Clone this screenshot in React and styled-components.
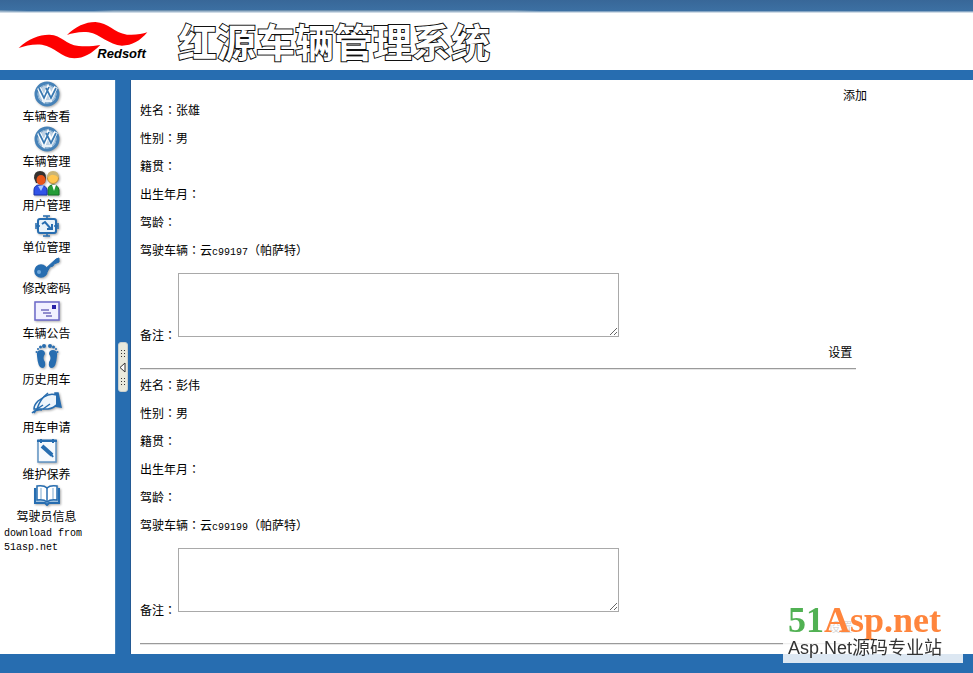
import React from "react";
import styled, { createGlobalStyle } from "styled-components";

const Global = createGlobalStyle`
  * { box-sizing: border-box; }
  body {
    margin: 0;
    background: #fff;
    color: #000;
    font: 12px/16px "Noto Sans CJK SC", sans-serif;
  }
`;

const Page = styled.div`
  display: flex;
  flex-direction: column;
  min-height: 100vh;
`;

const TopStrip = styled.div`
  height: 13px;
  background:
    linear-gradient(#fff0 11px, #cfdbe6 12px),
    linear-gradient(90deg, #6d90b0, #6d90b000 28px) 0 100% / 28px 3px no-repeat,
    linear-gradient(90deg, #6d90b000, #6d90b0 20px, #6d90b0 420px, #6d90b000) 94px 100% / 446px 3px no-repeat,
    linear-gradient(#386798, #3d72a5);
`;

const Header = styled.header`
  display: flex;
  align-items: center;
  gap: 30px;
  height: 67px;
  padding-left: 17px;
  border-bottom: 10px solid #276db0;
`;

const Title = styled.h1`
  margin: 0;
  padding-bottom: 4px;
  font: 700 39px/52px "Noto Sans CJK SC", sans-serif;
  color: #fff;
  -webkit-text-stroke: 2px #111;
  paint-order: stroke fill;
`;

const Body = styled.div`
  display: flex;
  flex: 1;
`;

const Sidebar = styled.nav`
  flex: 0 0 115px;
`;

const Menu = styled.ul`
  width: 93px;
  margin: 0;
  padding: 0;
  list-style: none;
`;

const MenuLink = styled.a`
  display: flex;
  flex-direction: column;
  align-items: center;
  color: #000;
  text-decoration: none;
  white-space: nowrap;
`;

const IconBox = styled.span`
  display: grid;
  place-items: center;
  height: ${(p) => p.$height}px;
  svg { filter: drop-shadow(1px 1px 1px #0005); }
`;

const Source = styled.p`
  width: 88px;
  margin: 3px 0 0 4px;
  font: 10px/14px "Liberation Mono", monospace;
`;

const Splitter = styled.div`
  display: flex;
  align-items: center;
  justify-content: center;
  flex: 0 0 16px;
  background: #276db0;
  border-left: 1px solid #4380b8;
  border-right: 1px solid #245a94;
`;

const Handle = styled.button`
  width: 10px;
  height: 50px;
  padding: 0;
  border: 1px solid #c9d0cf;
  border-radius: 3px;
  background: #e9eadd;
  svg { display: block; }
`;

const Content = styled.main`
  flex: 1;
  padding: 8px 0 0 9px;
`;

const Actions = styled.div`
  display: flex;
  justify-content: flex-end;
  padding-right: ${(p) => p.$inset}px;
  line-height: ${(p) => p.$line}px;
`;

const ActionLink = styled.a`
  color: #000;
  text-decoration: none;
`;

const Record = styled.section`
  width: 86%;
`;

const Fields = styled.div`
  display: flex;
  flex-direction: column;
  gap: 12px;
`;

const Field = styled.p`
  height: 16px;
  margin: 0;
`;

const Wide = styled.span`
  font-family: "Noto Sans CJK TC", sans-serif;
`;

const Plate = styled.span`
  font: 10px/12px "Liberation Mono", monospace;
`;

const NoteRow = styled.div`
  display: flex;
  align-items: flex-end;
  gap: 2px;
  margin: 15px 0 1px;
`;

const Note = styled.textarea`
  width: 441px;
  height: 64px;
  margin: 0 0 6px;
  border: 1px solid #a9a9a9;
  background: #fff;
  font: 12px/16px "Noto Sans CJK SC", sans-serif;
`;

const Divider = styled.hr`
  margin: 8px 0 7px;
  border: 0;
  border-top: 1px solid #9a9a9a;
  border-bottom: 1px solid #e6e6e6;
`;

const Footer = styled.footer`
  height: 19px;
  background: #276db0;
`;

const Watermark = styled.aside`
  position: fixed;
  right: 10px;
  bottom: 10px;
  width: 180px;
  padding: 0 0 5px 5px;
  background: #ffffffd6;
  white-space: nowrap;
  pointer-events: none;
`;

const Brand = styled.div`
  font: 700 36px/36px "Liberation Serif", serif;
  color: #ff853c;
`;

const Green = styled.span`
  color: #51b153;
`;

const Slogan = styled.div`
  font: 18px/20px "Liberation Sans", "Noto Sans CJK SC", sans-serif;
  color: #333;
`;

const blue = "#276db0";

const Svg = ({ w = 28, h = 26, children }) => (
  <svg width={w} height={h} viewBox={`0 0 ${w} ${h}`} fill="none" stroke={blue} strokeWidth="1.5" aria-hidden="true">
    {children}
  </svg>
);

const CarIcon = () => (
  <Svg>
    <circle cx="14" cy="13" r="11" fill="#bdd1e4" stroke="#4682b8" strokeWidth="3" />
    <circle cx="14" cy="13" r="9" stroke="#7fa9cd" strokeWidth="1" />
    <path d="M6 7l5 11 4-10 3 8 5-10" stroke="#fff" strokeWidth="4" />
    <path d="M6 7l5 10 5-11M13 7l5 10 5-10" stroke="#3979b2" strokeWidth="1.7" />
    <path d="M9 20h10" stroke="#e9f1f8" strokeWidth="2" />
  </Svg>
);

const UsersIcon = () => (
  <Svg>
    <path d="M15 25v-5q0-5 5-5t6 5v5z" fill="#249c37" stroke="#147426" strokeWidth="1" />
    <path d="M19 15l2 6 2-6z" fill="#fff" stroke="none" />
    <circle cx="20" cy="8" r="5.5" fill="#ffc64f" stroke="#b68b3c" strokeWidth="1" />
    <path d="M14 8q0-7 6-7t6 7q-4-4-8-3z" fill="#c9b475" stroke="none" />
    <path d="M1 25v-5q0-5 6-5t7 5v5z" fill="#3154e8" stroke="#1932aa" strokeWidth="1" />
    <path d="M5 16l3 5 3-6z" fill="#a9c9ff" stroke="none" />
    <path d="M1 8q0-7 6-7t6 7l-1 5H3z" fill="#34312f" stroke="none" />
    <ellipse cx="8" cy="10" rx="4.500" ry="5" fill="#e8551a" stroke="none" />
  </Svg>
);

const UnitIcon = () => (
  <Svg w={24} h={22}>
    <rect x="3" y="4" width="18" height="14" rx="2" fill="#e9f2f9" strokeWidth="2" />
    <path d="M8 1h7M8 21h7M1 8v6M23 8v6M12 1v4M12 17v4M1 11h4M19 11h4" />
    <path d="M7 9l3-2 6 7M12 14h5V9" strokeWidth="2" />
  </Svg>
);

const KeyIcon = () => (
  <Svg w={26} h={22}>
    <path d="M10 13L22 2l3-1v4l-5 2-1 2-3 1-3 5z" fill={blue} strokeWidth="1" />
    <circle cx="7" cy="14" r="6" fill={blue} />
    <circle cx="5" cy="15" r="2" fill="#70a8db" stroke="none" />
  </Svg>
);

const MailIcon = () => (
  <Svg w={26} h={22}>
    <rect x="1" y="2" width="24" height="18" fill="#f1f0ff" stroke="#6b68c9" />
    <path d="M18 5h4v4h-4z" fill="#2923a8" stroke="none" />
    <path d="M7 10h8M9 13h8M12 16h6" stroke="#716bbd" />
  </Svg>
);

const FeetIcon = () => (
  <Svg w={24} h={26}>
    <g fill={blue} stroke="none">
      <path d="M2 13q-1-6 4-6 4 0 4 4-3 4 0 8 1 6-3 6-4 0-5-12z" />
      <path d="M22 13q1-6-4-6-4 0-4 4 3 4 0 8-1 6 3 6 4 0 5-12z" />
      <circle cx="9" cy="3" r="2" /><circle cx="5.500" cy="4" r="1.500" /><circle cx="3" cy="6" r="1" /><circle cx="1.500" cy="9" r="1" />
      <circle cx="15" cy="3" r="2" /><circle cx="18.500" cy="4" r="1.500" /><circle cx="21" cy="6" r="1" /><circle cx="22.500" cy="9" r="1" />
    </g>
  </Svg>
);

const WriteIcon = () => (
  <Svg w={32} h={24}>
    <path d="M24 2h3l3 14-6-1z" fill={blue} />
    <path d="M25 4q-6-2-12 2L7 10q-4 4-4 8h14q6-1 8-4" fill="#eef5fb" />
    <path d="M17 2Q9 8 6 18l-3 4M6 18l6-4M12 18l7-5M1 22q4-4 10-3" />
  </Svg>
);

const NotepadIcon = () => (
  <Svg w={22} h={26}>
    <rect x="2" y="2" width="18" height="22" fill="#f5f9fd" stroke="#5f92c2" />
    <path d="M1 3h20M5 1v4M17 1v4" strokeWidth="2" />
    <path d="M6 8l10 9" strokeWidth="4" />
    <path d="M15 16l2 3" strokeWidth="2" />
  </Svg>
);

const BookIcon = () => (
  <Svg w={28} h={22}>
    <path d="M2 4v15h10l2 2 2-2h10V4" fill="#9fc1df" strokeWidth="2" />
    <path d="M4 2q7-1 10 2 3-3 10-2v14q-7-1-10 2-3-3-10-2z" fill="#fff" />
    <path d="M14 4v14" />
    <path d="M8 4v11M20 4v11" stroke="#a9c6e0" />
  </Svg>
);

const MENU = [
  ["车辆查看", CarIcon, 28],
  ["车辆管理", CarIcon, 29],
  ["用户管理", UsersIcon, 28],
  ["单位管理", UnitIcon, 26],
  ["修改密码", KeyIcon, 25],
  ["车辆公告", MailIcon, 29],
  ["历史用车", FeetIcon, 30],
  ["用车申请", WriteIcon, 32],
  ["维护保养", NotepadIcon, 31],
  ["驾驶员信息", BookIcon, 26],
];

const DRIVERS = [
  { id: "d1", name: "张雄", sex: "男", plate: "c99197" },
  { id: "d2", name: "彭伟", sex: "男", plate: "c99199" },
];

const Logo = () => (
  <svg width="131" height="44" viewBox="50 60 393 132" role="img" aria-label="Redsoft">
    <g fill="#fe0000">
      <path d="M55 144C85 115 120 103 148 104c37 2 47 29 87 34 25 2 45 0 65-3-25 25-50 40-78 40-42-2-57-35-97-41-25-3-50 3-70 10z" />
      <path d="M200 105c25-25 55-39 85-39 40 2 55 32 95 38 25 2 45-2 61-7-21 25-46 40-76 40-40-2-65-34-100-40-25-3-47 2-65 8z" />
    </g>
    <text x="291" y="175" fontFamily="Liberation Sans, sans-serif" fontSize="39" fontWeight="700" fontStyle="italic">Redsoft</text>
  </svg>
);

const Label = ({ text, children }) => (
  <Field>{text}<Wide>：</Wide>{children}</Field>
);

const Driver = ({ id, name, sex, plate }) => (
  <Record>
    <Fields>
      <Label text="姓名">{name}</Label>
      <Label text="性别">{sex}</Label>
      <Label text="籍贯" />
      <Label text="出生年月" />
      <Label text="驾龄" />
      <Label text="驾驶车辆">云<Plate>{plate}</Plate><Wide>（</Wide>帕萨特<Wide>）</Wide></Label>
    </Fields>
    <NoteRow>
      <label htmlFor={id}>备注<Wide>：</Wide></label>
      <Note id={id} />
    </NoteRow>
    <Actions $inset={4} $line={16}><ActionLink href="#">设置</ActionLink></Actions>
    <Divider />
  </Record>
);

export default function App() {
  return (
    <Page>
      <Global />
      <TopStrip />
      <Header>
        <Logo />
        <Title>红源车辆管理系统</Title>
      </Header>
      <Body>
        <Sidebar>
          <Menu>
            {MENU.map(([text, Icon, height]) => (
              <li key={text}>
                <MenuLink href="#">
                  <IconBox $height={height}><Icon /></IconBox>
                  {text}
                </MenuLink>
              </li>
            ))}
          </Menu>
          <Source>download from 51asp.net</Source>
        </Sidebar>
        <Splitter>
          <Handle type="button" aria-label="收起菜单">
            <svg width="8" height="48" viewBox="0 0 8 48" fill="none" stroke="#333">
              <path d="M6 20v9l-5-4.500z" fill="#fff" />
              <path d="M2 8l1-1m2 1l1-1M2 11l1-1m2 1l1-1M2 14l1-1m2 1l1-1M2 36l1-1m2 1l1-1M2 39l1-1m2 1l1-1M2 42l1-1m2 1l1-1" />
            </svg>
          </Handle>
        </Splitter>
        <Content>
          <Actions $inset={106} $line={14}><ActionLink href="#">添加</ActionLink></Actions>
          {DRIVERS.map((d) => <Driver key={d.id} {...d} />)}
        </Content>
      </Body>
      <Footer />
      <Watermark>
        <Brand><Green>51</Green>Asp.net</Brand>
        <Slogan>Asp.Net源码专业站</Slogan>
      </Watermark>
    </Page>
  );
}
